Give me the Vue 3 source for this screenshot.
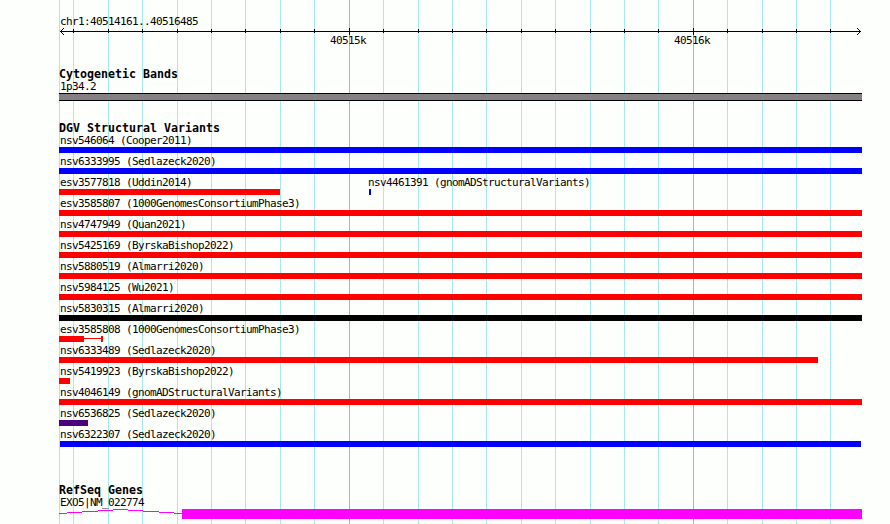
<template>
  <div class="browser">
    <svg class="grid" width="890" height="524" shape-rendering="crispEdges">
      <rect
        v-for="x in gridLines"
        :key="x"
        :x="x"
        y="0"
        width="1"
        height="524"
        :fill="isMajor(x) ? '#87c1e6' : '#a6ebeb'"
      />
    </svg>

    <div class="panel">
      <header class="ruler">
        <div class="label region">chr1:40514161..40516485</div>
        <svg class="axis" width="803" height="7" shape-rendering="crispEdges">
          <rect x="1" y="3" width="801" height="1" />
          <rect
            v-for="x in gridLines.slice(1)"
            :key="x"
            :x="x - left"
            :y="isMajor(x) ? 0 : 1"
            width="1"
            :height="isMajor(x) ? 7 : 4"
          />
          <path d="M2 2h1v1h-1zM3 1h1v1h-1zM4 0h1v1h-1zM2 4h1v1h-1zM3 5h1v1h-1zM4 6h1v1h-1z" />
          <path d="M800 2h1v1h-1zM799 1h1v1h-1zM798 0h1v1h-1zM800 4h1v1h-1zM799 5h1v1h-1zM798 6h1v1h-1z" />
        </svg>
        <div class="scale">
          <span class="label">40515k</span>
          <span class="label">40516k</span>
        </div>
      </header>

      <section class="track cytoband">
        <h2>Cytogenetic Bands</h2>
        <div class="label">1p34.2</div>
        <div class="band"></div>
      </section>

      <section class="track variants">
        <h2>DGV Structural Variants</h2>
        <div v-for="(row, i) in rows" :key="i" class="row">
          <div
            v-for="v in row"
            :key="v.name"
            class="feature"
            :style="{ marginLeft: v.offset + 'px' }"
          >
            <div class="label" :class="{ tight: v.offset > 0 }">{{ v.name }} ({{ v.study }})</div>
            <div class="glyph">
              <div class="bar" :style="{ width: v.width + 'px', background: v.color }"></div>
              <template v-if="v.tail">
                <div class="link" :style="{ width: v.tail + 'px', background: v.color }"></div>
                <div class="bar" :style="{ width: '2px', background: v.color }"></div>
              </template>
            </div>
          </div>
        </div>
      </section>

      <section class="track genes">
        <h2>RefSeq Genes</h2>
        <div class="label">EXO5|NM_022774</div>
        <div class="gene">
          <svg width="123" height="10" shape-rendering="crispEdges">
            <path
              d="M0 4h8v1h-8zM8 3h15v1h-15zM23 2h16v1h-16zM39 1h15v1h-15zM54 0h15v1h-15zM69 1h15v1h-15zM84 2h16v1h-16zM100 3h15v1h-15zM115 4h8v1h-8z"
              fill="#ff00ff"
            />
          </svg>
          <div class="exon"></div>
        </div>
      </section>
    </div>
  </div>
</template>

<script setup>
const left = 59

const gridLines = [
  59, 73, 108, 142, 177, 211, 245, 280, 314, 349, 383, 418,
  452, 486, 521, 555, 590, 624, 658, 693, 727, 762, 796, 830,
]

const isMajor = (x) => x === 349 || x === 693

const GAIN = '#0000ff'
const LOSS = '#ff0000'
const COMPLEX = '#000000'
const INVERSION = '#4b0082'

function variant(name, study, color, width = 803, offset = 0, tail = 0) {
  return { name, study, color, width, offset, tail }
}

const rows = [
  [variant('nsv546064', 'Cooper2011', GAIN)],
  [variant('nsv6333995', 'Sedlazeck2020', GAIN)],
  [
    variant('esv3577818', 'Uddin2014', LOSS, 221),
    variant('nsv4461391', 'gnomADStructuralVariants', GAIN, 2, 89),
  ],
  [variant('esv3585807', '1000GenomesConsortiumPhase3', LOSS)],
  [variant('nsv4747949', 'Quan2021', LOSS)],
  [variant('nsv5425169', 'ByrskaBishop2022', LOSS)],
  [variant('nsv5880519', 'Almarri2020', LOSS)],
  [variant('nsv5984125', 'Wu2021', LOSS)],
  [variant('nsv5830315', 'Almarri2020', COMPLEX)],
  [variant('esv3585808', '1000GenomesConsortiumPhase3', LOSS, 25, 0, 17)],
  [variant('nsv6333489', 'Sedlazeck2020', LOSS, 759)],
  [variant('nsv5419923', 'ByrskaBishop2022', LOSS, 11)],
  [variant('nsv4046149', 'gnomADStructuralVariants', LOSS)],
  [variant('nsv6536825', 'Sedlazeck2020', INVERSION, 29)],
  [variant('nsv6322307', 'Sedlazeck2020', GAIN, 801, 1)],
]
</script>

<style>
body {
  margin: 0;
  background: #fdfffc;
}
</style>

<style scoped>
.browser {
  position: relative;
  width: 890px;
  height: 524px;
  overflow: hidden;
  background: #fdfffc;
  color: #000;
  font-family: 'DejaVu Sans Mono', 'Liberation Mono', monospace;
}
.grid {
  position: absolute;
  top: 0;
  left: 0;
}
.panel {
  position: relative;
  width: 803px;
  margin-left: 59px;
  padding-top: 15px;
}
svg {
  display: block;
}
.label {
  height: 13px;
  padding-left: 1px;
  font-size: 11px;
  line-height: 13px;
  letter-spacing: -0.623px;
  white-space: pre;
}
.label.tight {
  padding-left: 0;
}
.row .feature + .feature .label {
  margin-left: -1px;
}
h2 {
  height: 13px;
  margin: 0;
  font-size: 11.63px;
  line-height: 13px;
  font-weight: bold;
  white-space: pre;
}
.ruler {
  height: 53px;
}
.scale {
  display: flex;
  gap: 307px;
  margin-top: -1px;
  padding-left: 270px;
}
.scale .label {
  width: 36px;
}
.cytoband {
  height: 54px;
}
.cytoband .band {
  height: 6px;
  border-top: 1px solid #000;
  border-bottom: 1px solid #000;
  background: #848084;
}
.cytoband .label,
.genes .label {
  height: 12px;
  line-height: 11px;
}
.variants {
  height: 362px;
}
.row {
  display: flex;
  height: 21px;
}
.variants h2 {
  height: 12px;
}
.feature {
  width: 221px;
}
.glyph {
  display: flex;
  align-items: center;
}
.bar {
  flex-shrink: 0;
  height: 6px;
}
.link {
  flex-shrink: 0;
  height: 1px;
  margin-bottom: 1px;
}
.gene {
  display: flex;
}
.exon {
  width: 680px;
  height: 10px;
  background: #ff00ff;
}
</style>
